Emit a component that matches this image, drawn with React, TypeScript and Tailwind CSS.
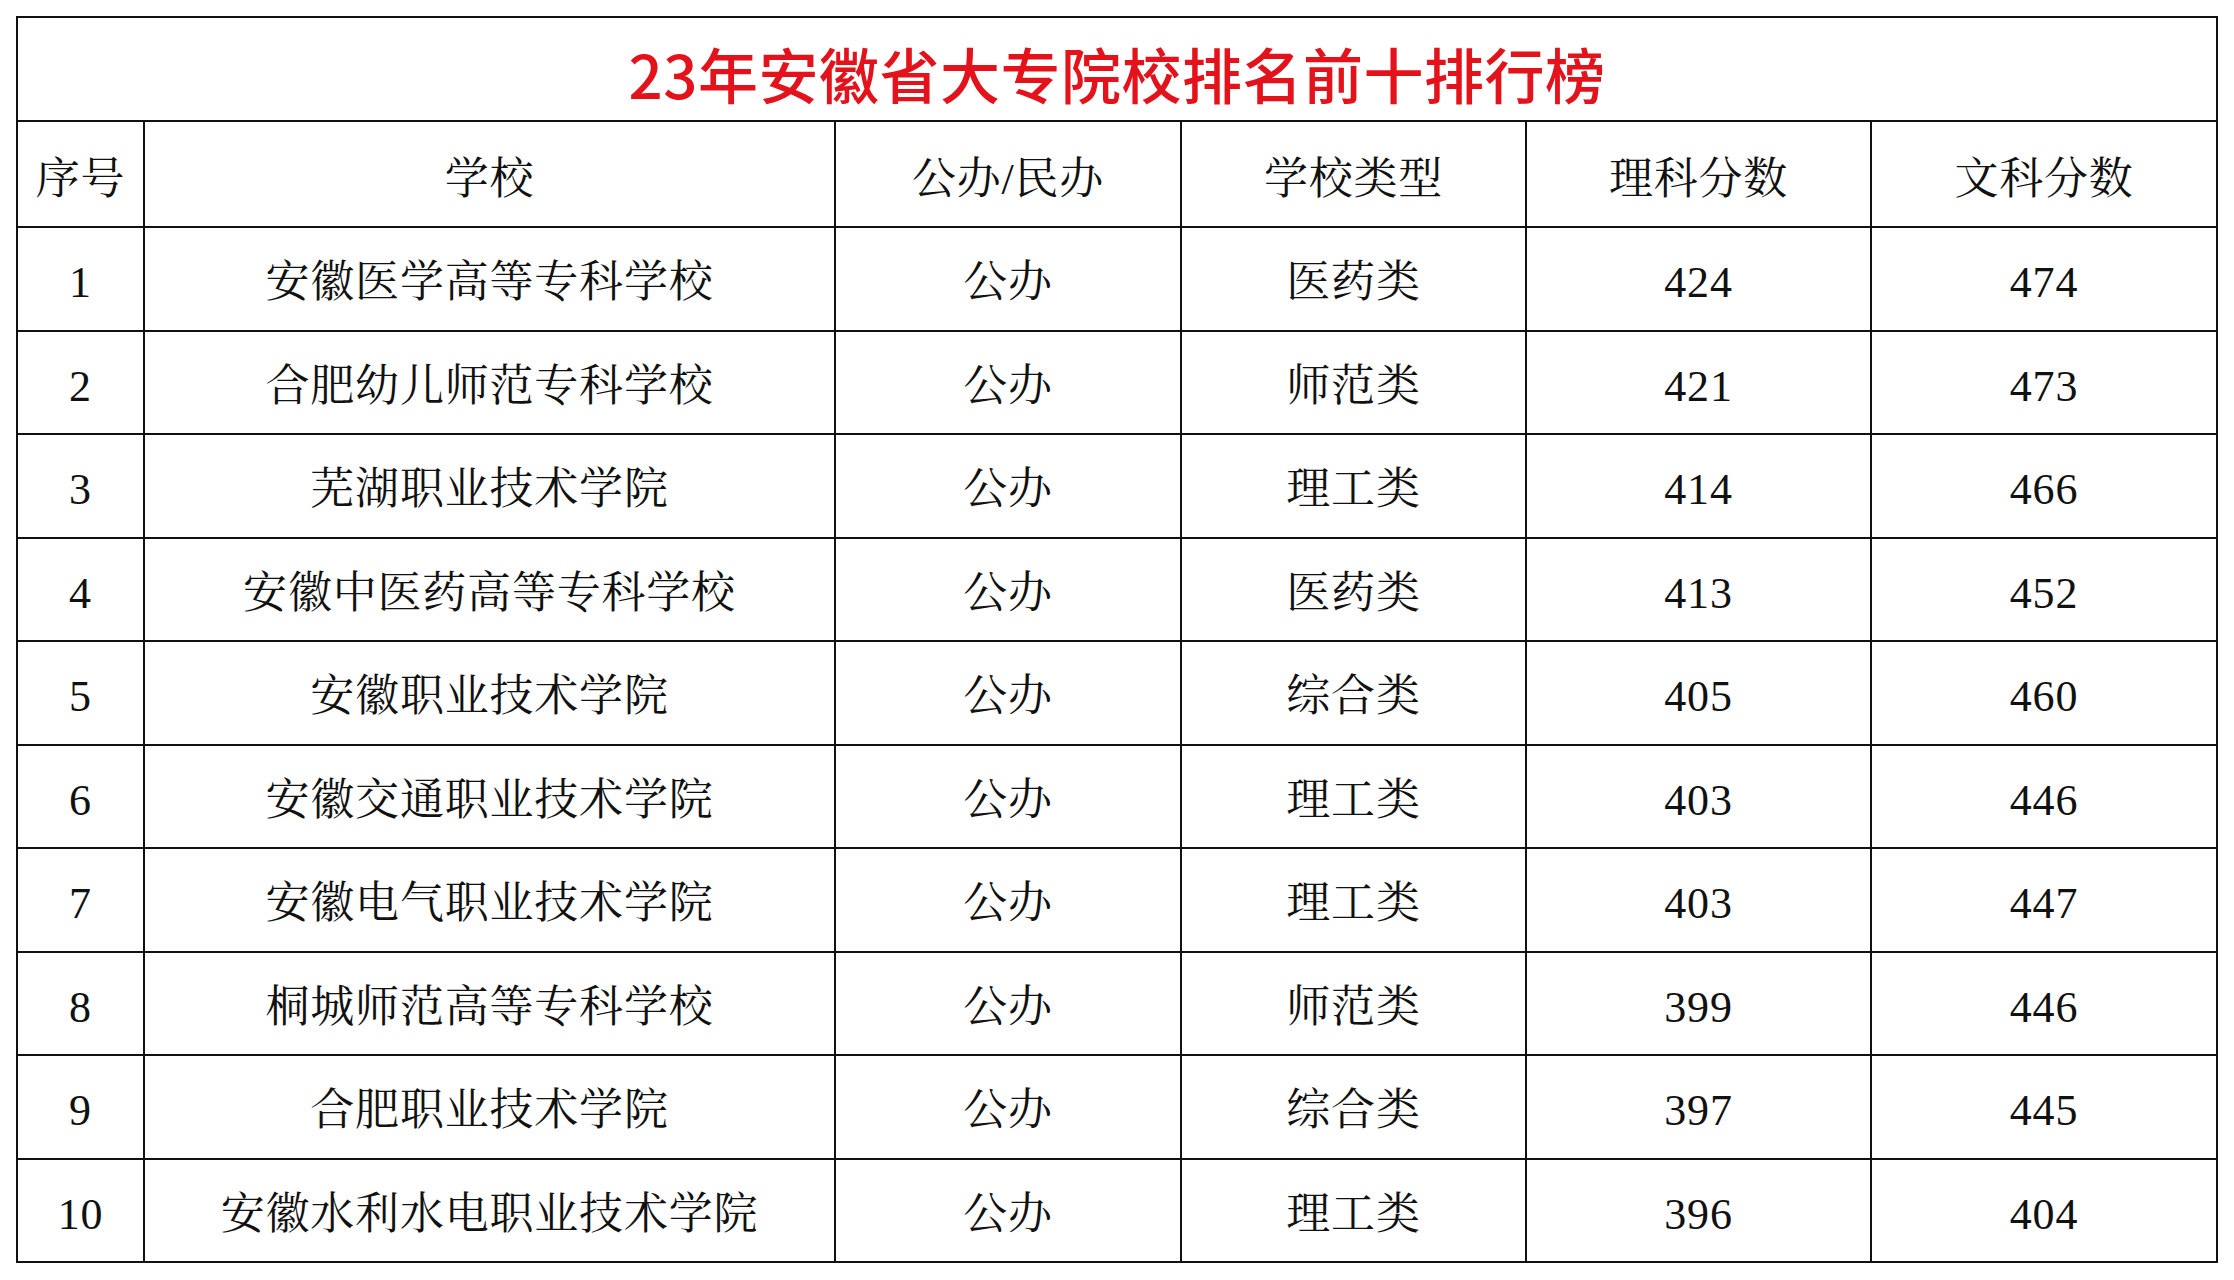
import React from "react";

const rows: [string, string, string, string, string, string][] = [
  ["1", "安徽医学高等专科学校", "公办", "医药类", "424", "474"],
  ["2", "合肥幼儿师范专科学校", "公办", "师范类", "421", "473"],
  ["3", "芜湖职业技术学院", "公办", "理工类", "414", "466"],
  ["4", "安徽中医药高等专科学校", "公办", "医药类", "413", "452"],
  ["5", "安徽职业技术学院", "公办", "综合类", "405", "460"],
  ["6", "安徽交通职业技术学院", "公办", "理工类", "403", "446"],
  ["7", "安徽电气职业技术学院", "公办", "理工类", "403", "447"],
  ["8", "桐城师范高等专科学校", "公办", "师范类", "399", "446"],
  ["9", "合肥职业技术学院", "公办", "综合类", "397", "445"],
  ["10", "安徽水利水电职业技术学院", "公办", "理工类", "396", "404"],
];

const headers = ["序号", "学校", "公办/民办", "学校类型", "理科分数", "文科分数"];

const serif = {
  fontFamily:
    '"Liberation Serif", "Noto Serif CJK SC", "Noto Sans CJK SC", serif',
};

export default function App() {
  return (
    <div className="min-h-[1280px] w-[2234px] bg-white pl-[16px] pt-[16px]">
      <table
        className="table-fixed border-collapse border-2 border-[#111] text-[44px] leading-none tracking-[0.8px] text-[#111]"
        style={serif}
      >
        <colgroup>
          <col className="w-[127px]" />
          <col className="w-[691px]" />
          <col className="w-[346px]" />
          <col className="w-[345px]" />
          <col className="w-[345px]" />
          <col className="w-[346px]" />
        </colgroup>
        <tbody>
          <tr className="h-[104px]">
            <td
              colSpan={6}
              className="border-2 border-[#111] pt-[8px] text-center text-[60px] font-medium tracking-[0.5px] text-[#e3121b]"
              style={{ fontFamily: '"Noto Sans CJK SC", "Liberation Sans", sans-serif' }}
            >
              23年安徽省大专院校排名前十排行榜
            </td>
          </tr>
          <tr className="h-[106px]">
            {headers.map((h) => (
              <td key={h} className="border-2 border-[#111] pt-[12px] text-center align-middle">
                {h}
              </td>
            ))}
          </tr>
          {rows.map((r) => (
            <tr key={r[0]} className="h-[103.5px]">
              {r.map((c, i) => (
                <td key={i} className="border-2 border-[#111] pt-[9px] text-center align-middle">
                  {c}
                </td>
              ))}
            </tr>
          ))}
        </tbody>
      </table>
    </div>
  );
}
